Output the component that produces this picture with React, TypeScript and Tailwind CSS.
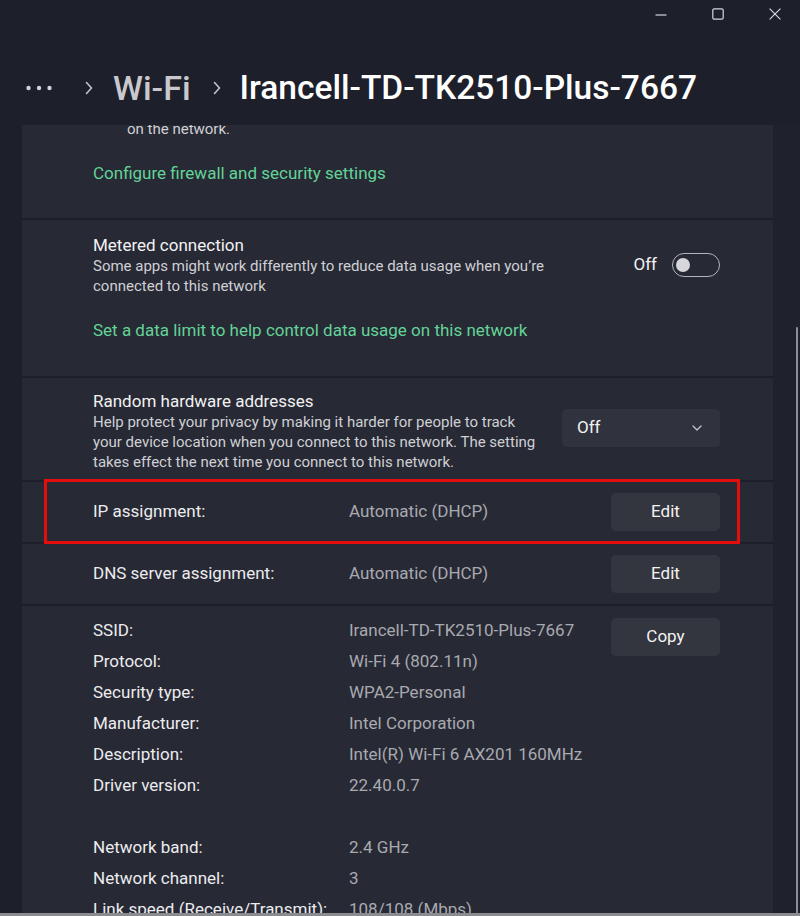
import React from "react";

const details = [
  { label: "SSID:", value: "Irancell-TD-TK2510-Plus-7667" },
  { label: "Protocol:", value: "Wi-Fi 4 (802.11n)" },
  { label: "Security type:", value: "WPA2-Personal" },
  { label: "Manufacturer:", value: "Intel Corporation" },
  { label: "Description:", value: "Intel(R) Wi-Fi 6 AX201 160MHz" },
  { label: "Driver version:", value: "22.40.0.7" },
  { label: "", value: "" },
  { label: "Network band:", value: "2.4 GHz" },
  { label: "Network channel:", value: "3" },
  { label: "Link speed (Receive/Transmit):", value: "108/108 (Mbps)" },
];

function Chevron() {
  return (
    <svg width="8" height="14" viewBox="0 0 8 14" fill="none">
      <path d="M1.5 1.5 L6.5 7 L1.5 12.5" stroke="#c4c5ca" strokeWidth="1.6" strokeLinecap="round" strokeLinejoin="round" />
    </svg>
  );
}

function Button({ children }: { children: React.ReactNode }) {
  return (
    <button
      type="button"
      className="flex h-[38px] w-[109px] shrink-0 items-center justify-center rounded-[5px] bg-[#34363f] text-[17px] text-[#f2f2f2]"
    >
      {children}
    </button>
  );
}

export default function App() {
  return (
    <div className="flex h-[916px] w-[800px] flex-col overflow-hidden bg-[#1d1f2a] font-['Roboto',sans-serif] text-white">
      {/* Title bar + breadcrumb */}
      <header className="h-[125px] shrink-0">
        <div className="flex h-[32px] items-start justify-end gap-[45px] pr-[19px] pt-[8px]">
          <svg width="12" height="12" viewBox="0 0 12 12">
            <path d="M0.5 7 H11.5" stroke="#d6d6da" strokeWidth="1.2" />
          </svg>
          <svg width="12" height="12" viewBox="0 0 12 12" fill="none">
            <rect x="0.8" y="0.8" width="10.4" height="10.4" rx="1.5" stroke="#d6d6da" strokeWidth="1.2" />
          </svg>
          <svg width="12" height="12" viewBox="0 0 12 12" fill="none">
            <path d="M0.6 0.6 L11.4 11.4 M11.4 0.6 L0.6 11.4" stroke="#d6d6da" strokeWidth="1.2" />
          </svg>
        </div>

        <div className="mt-[34px] flex h-[44px] items-center pl-[26px]">
          <svg width="26" height="6" viewBox="0 0 26 6">
            <circle cx="2.5" cy="3" r="2.2" fill="#d2d2d6" />
            <circle cx="13" cy="3" r="2.2" fill="#d2d2d6" />
            <circle cx="23.5" cy="3" r="2.2" fill="#d2d2d6" />
          </svg>
          <span className="ml-[33px] flex">
            <Chevron />
          </span>
          <span className="ml-[20px] text-[34px] font-medium leading-[44px] text-[#c9c9cd]">Wi-Fi</span>
          <span className="ml-[22px] flex">
            <Chevron />
          </span>
          <span className="ml-[19px] text-[33.5px] font-medium leading-[44px] text-white">
            Irancell-TD-TK2510-Plus-7667
          </span>
        </div>
      </header>

      {/* Scrolled settings area */}
      <div className="flex min-h-0 flex-1 overflow-hidden">
        <div className="w-[22px] shrink-0" />

        <div className="-mt-[6px] flex w-[751px] shrink-0 flex-col gap-[2px]">
          {/* Network profile (tail) */}
          <div className="shrink-0 bg-[#272935] pb-[33px] pl-[71px]">
            <p className="pl-[34px] text-[15px] leading-[20px] text-[#cfd0d4]">on the network.</p>
            <a className="mt-[22px] block text-[17px] leading-[24px] text-[#63d397]">
              Configure firewall and security settings
            </a>
          </div>

          {/* Metered connection */}
          <div className="shrink-0 bg-[#272935] pb-[34px] pl-[71px] pr-[53px] pt-[14px]">
            <div className="flex items-center">
              <div className="flex-1">
                <div className="text-[17px] leading-[22px] text-[#f2f2f2]">Metered connection</div>
                <div className="text-[15px] leading-[20px] text-[#cfd0d4]">
                  Some apps might work differently to reduce data usage when you’re
                  <br />
                  connected to this network
                </div>
              </div>
              <span className="text-[17px] text-[#f2f2f2]">Off</span>
              <div className="ml-[15px] flex h-[24px] w-[48px] items-center rounded-full border-[1.5px] border-[#b4b5bc] px-[3px]">
                <div className="h-[14px] w-[14px] rounded-full bg-[#d6d6dc]" />
              </div>
            </div>
            <a className="mt-[22px] block text-[17px] leading-[24px] text-[#63d397]">
              Set a data limit to help control data usage on this network
            </a>
          </div>

          {/* Random hardware addresses */}
          <div className="flex shrink-0 items-start bg-[#272935] pb-[8px] pl-[71px] pr-[53px] pt-[12px]">
            <div className="flex-1">
              <div className="text-[17px] leading-[22px] text-[#f2f2f2]">Random hardware addresses</div>
              <div className="text-[15px] leading-[20px] text-[#cfd0d4]">
                Help protect your privacy by making it harder for people to track
                <br />
                your device location when you connect to this network. The setting
                <br />
                takes effect the next time you connect to this network.
              </div>
            </div>
            <div className="mt-[19px] flex h-[38px] w-[158px] items-center justify-between rounded-[5px] bg-[#30323e] pl-[15px] pr-[18px]">
              <span className="text-[17px] text-[#f2f2f2]">Off</span>
              <svg width="10" height="6" viewBox="0 0 10 6" fill="none">
                <path d="M1 1 L5 5 L9 1" stroke="#c8c9ce" strokeWidth="1.2" strokeLinecap="round" strokeLinejoin="round" />
              </svg>
            </div>
          </div>

          {/* IP assignment (highlighted) */}
          <div className="relative flex h-[60px] shrink-0 items-center bg-[#272935] pl-[71px] pr-[53px]">
            <span className="w-[256px] text-[17px] text-[#ececee]">IP assignment:</span>
            <span className="flex-1 text-[17px] text-[#a9aab0]">Automatic (DHCP)</span>
            <Button>Edit</Button>
            <div className="pointer-events-none absolute -bottom-[2px] -top-[3px] left-[22px] right-[33px] border-[3px] border-[#e30d0d]" />
          </div>

          {/* DNS server assignment */}
          <div className="flex h-[60px] shrink-0 items-center bg-[#272935] pl-[71px] pr-[53px]">
            <span className="w-[256px] text-[17px] text-[#ececee]">DNS server assignment:</span>
            <span className="flex-1 text-[17px] text-[#a9aab0]">Automatic (DHCP)</span>
            <Button>Edit</Button>
          </div>

          {/* Properties */}
          <div className="flex shrink-0 items-start bg-[#272935] pb-[20px] pl-[71px] pr-[53px] pt-[9px]">
            <div className="flex-1">
              {details.map((d, i) => (
                <div key={i} className="flex h-[31px] items-center text-[17px]">
                  <span className="w-[256px] text-[#ececee]">{d.label}</span>
                  <span className="text-[#a9aab0]">{d.value}</span>
                </div>
              ))}
            </div>
            <div className="mt-[3px]">
              <Button>Copy</Button>
            </div>
          </div>
        </div>

        {/* Right gutter with scrollbar */}
        <div className="flex flex-1 justify-end bg-[#1f212c] pr-[2px] pt-[202px]">
          <div className="h-[590px] w-[2px] rounded-full bg-[#8e8f96]" />
        </div>
      </div>

      <div className="h-[3px] shrink-0 bg-[#8a8b8f]" />
    </div>
  );
}
